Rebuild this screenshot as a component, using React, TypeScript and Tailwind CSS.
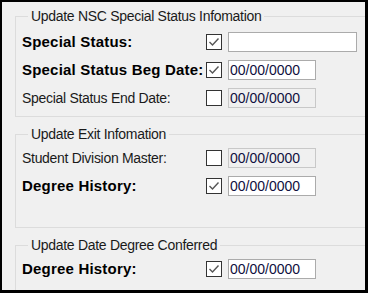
import React from "react";

const font = { fontFamily: '"Liberation Sans", Arial, sans-serif' };

function Check({ checked }: { checked: boolean }) {
  return (
    <div className="w-[16px] h-[16px] border border-[#333333] bg-white flex items-center justify-center shrink-0">
      {checked && (
        <svg width="12" height="10" viewBox="0 0 12 10">
          <polyline points="1.5,5 4.5,8 10.5,1.5" fill="none" stroke="#555555" strokeWidth="1.4" />
        </svg>
      )}
    </div>
  );
}

function Row({
  label,
  bold,
  checked,
  value,
  disabled,
  wide,
}: {
  label: string;
  bold?: boolean;
  checked: boolean;
  value: string;
  disabled?: boolean;
  wide?: boolean;
}) {
  return (
    <div className="flex items-center h-[20px]">
      <div
        className={
          bold
            ? "w-[184px] shrink-0 font-bold text-[15px] tracking-[0.2px] text-black leading-[20px] whitespace-nowrap"
            : "w-[184px] shrink-0 text-[14px] tracking-[-0.3px] text-[#1a1a1a] leading-[20px] whitespace-nowrap"
        }
      >
        {label}
      </div>
      <Check checked={checked} />
      <div
        className={
          (wide ? "w-[129px] " : "w-[88px] ") +
          "ml-[6px] h-[20px] border flex items-center pl-[1px] text-[14px] leading-none text-[#101040] " +
          (disabled ? "bg-[#f0f0f0] border-[#c8c8c8]" : "bg-white border-[#ababab]")
        }
      >
        {value}
      </div>
    </div>
  );
}

function Group({ title, children, bottomPad }: { title: string; children: React.ReactNode; bottomPad: string }) {
  return (
    <fieldset className={"ml-[13px] mr-[-6px] border border-[#dcdcdc] pl-[6px] " + bottomPad}>
      <legend className="ml-[6px] px-[3px] text-[14px] tracking-[-0.3px] leading-[16px] text-[#1a1a1a] whitespace-nowrap">
        {title}
      </legend>
      {children}
    </fieldset>
  );
}

export default function App() {
  return (
    <div className="w-[368px] h-[293px] bg-black pt-[2px] pl-[2px] pr-[3px] pb-[3px]" style={font}>
      <div className="w-full h-full bg-[#f0f0f0] overflow-hidden pt-[6px]">
        <Group title="Update NSC Special Status Infomation" bottomPad="pb-[8px]">
          <div className="flex flex-col gap-[8px] pt-[8px]">
            <Row label="Special Status:" bold checked value="" wide />
            <Row label="Special Status Beg Date:" bold checked value="00/00/0000" />
            <Row label="Special Status End Date:" checked={false} value="00/00/0000" disabled />
          </div>
        </Group>
        <div className="h-[9px]" />
        <Group title="Update Exit Infomation" bottomPad="pb-[31px]">
          <div className="flex flex-col gap-[8px] pt-[6px]">
            <Row label="Student Division Master:" checked={false} value="00/00/0000" disabled />
            <Row label="Degree History:" bold checked value="00/00/0000" />
          </div>
        </Group>
        <div className="h-[9px]" />
        <Group title="Update Date Degree Conferred" bottomPad="pb-[20px]">
          <div className="flex flex-col gap-[8px] pt-[6px]">
            <Row label="Degree History:" bold checked value="00/00/0000" />
          </div>
        </Group>
      </div>
    </div>
  );
}
